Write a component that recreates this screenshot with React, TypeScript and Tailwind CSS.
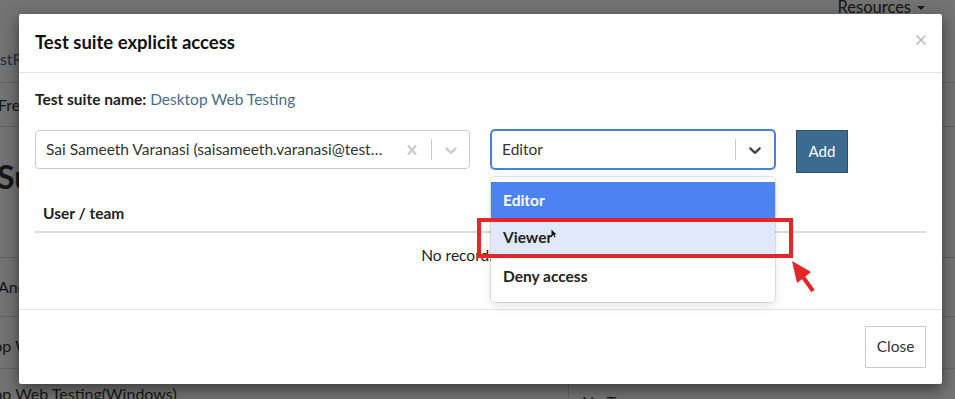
import React from "react";

const CrossIcon = ({ className }: { className?: string }) => (
  <svg viewBox="0 0 20 20" width="20" height="20" className={className} fill="currentColor">
    <path d="M14.348 14.849c-0.469 0.469-1.229 0.469-1.697 0l-2.651-3.030-2.651 3.029c-0.469 0.469-1.229 0.469-1.697 0-0.469-0.469-0.469-1.229 0-1.697l2.758-3.15-2.759-3.152c-0.469-0.469-0.469-1.228 0-1.697s1.228-0.469 1.697 0l2.652 3.031 2.651-3.031c0.469-0.469 1.228-0.469 1.697 0s0.469 1.229 0 1.697l-2.758 3.152 2.758 3.15c0.469 0.469 0.469 1.229 0 1.698z" />
  </svg>
);

const ChevronIcon = ({ className }: { className?: string }) => (
  <svg viewBox="0 0 20 20" width="20" height="20" className={className} fill="currentColor">
    <path d="M4.516 7.548c0.436-0.446 1.043-0.481 1.576 0l3.908 3.747 3.908-3.747c0.533-0.481 1.141-0.446 1.574 0 0.436 0.445 0.408 1.197 0 1.615-0.406 0.418-4.695 4.502-4.695 4.502-0.217 0.223-0.502 0.335-0.787 0.335s-0.57-0.112-0.789-0.335c0 0-4.287-4.084-4.695-4.502s-0.436-1.17 0-1.615z" />
  </svg>
);

// the dimmed page behind the dialog
const BackgroundPage = () => (
  <div className="flex h-full flex-col text-[#333]">
    <div className="flex h-[35px] shrink-0 justify-end pr-[30px]">
      <span className="-mt-[5px] flex h-[24px] items-center gap-[6px] text-[16.5px]">
        Resources
        <span className="mt-[2px] h-0 w-0 border-x-[4px] border-t-[4px] border-x-transparent border-t-[#333]" />
      </span>
    </div>
    <div className="flex h-[48px] shrink-0 items-center border-b border-[#ddd] text-base text-[#3f6a8f]">
      <span className="-ml-[16px]">TestRail Projects</span>
    </div>
    <div className="flex h-[44px] shrink-0 items-center border-b border-[#ddd] text-base">
      <span className="-ml-[2px]">Fresh Suites</span>
    </div>
    <div className="flex h-[130px] shrink-0 items-start pt-[26px] text-[32px] font-bold">
      <span className="-ml-[3px]">Suites</span>
    </div>
    <div className="flex h-[60px] shrink-0 border-y border-[#ddd] text-base">
      <div className="flex w-[569px] items-center border-r border-[#ddd]">
        <span className="-ml-[2px]">Android App Testing</span>
      </div>
      <div className="flex-1" />
    </div>
    <div className="flex h-[52px] shrink-0 border-b border-[#ddd] text-base">
      <div className="flex w-[569px] items-center border-r border-[#ddd] pt-[6px]">
        <span className="-ml-[48px]">Desktop Web Testing</span>
      </div>
      <div className="flex-1" />
    </div>
    <div className="flex flex-1 text-base">
      <div className="w-[569px] border-r border-[#ddd] pt-[13px]">
        <span className="-ml-[48px]">Desktop Web Testing(Windows)</span>
      </div>
      <div className="flex-1 whitespace-nowrap pl-[13px] pt-[21px]">No Team</div>
    </div>
  </div>
);

const UserSelect = () => (
  <div className="flex h-[39px] w-[435px] items-center rounded-[4px] border border-[#ccc] bg-white">
    <div className="flex-1 whitespace-nowrap pl-[10px] text-[15.5px] text-[#333]">
      Sai Sameeth Varanasi (saisameeth.varanasi@test…
    </div>
    <div className="flex w-[38px] justify-center text-[#ccc]">
      <CrossIcon />
    </div>
    <span className="h-[21px] w-px bg-[#ccc]" />
    <div className="flex w-[37px] justify-center text-[#ccc]">
      <ChevronIcon />
    </div>
  </div>
);

const RoleSelect = () => {
  const options = ["Editor", "Viewer", "Deny access"];

  return (
    <div className="relative w-[284px]">
      <div className="flex h-[39px] items-center rounded-[4px] border border-[#4c7fdc] bg-white shadow-[0_0_0_1px_#4c7fdc]">
        <div className="flex-1 pl-[10px] text-[15.5px] text-[#333]">Editor</div>
        <span className="h-[21px] w-px bg-[#ccc]" />
        <div className="flex w-[38px] justify-center text-[#444]">
          <ChevronIcon />
        </div>
      </div>
      <div className="absolute left-0 top-[47px] z-10 w-full rounded-[4px] bg-white py-[5px] shadow-[0_0_0_1px_rgba(0,0,0,0.1),0_4px_11px_rgba(0,0,0,0.1)]">
        {options.map((option, index) => (
          <div
            key={index}
            className={
              index === 0
                ? "flex h-[37px] items-center bg-[#4c82f1] px-3 text-[15.5px] font-bold text-white"
                : index === 1
                ? "flex h-[38px] items-center bg-[#e0e9fb] px-3 text-[15.5px] font-bold text-[#222]"
                : "flex h-[40px] items-center px-3 text-[15.5px] font-bold text-[#222]"
            }
          >
            {option}
          </div>
        ))}
      </div>
    </div>
  );
};

const AccessModal = () => (
  <div className="w-[923px] rounded-[2px] bg-white shadow-[0_5px_15px_rgba(0,0,0,0.5)]">
    <div className="flex h-[59px] items-center justify-between border-b border-[#e5e5e5] px-4">
      <h4 className="text-[18.5px] font-bold text-[#111]">Test suite explicit access</h4>
      <svg width="10" height="10" viewBox="0 0 10 10" className="-mt-[6px] text-[#b3b3b3]">
        <path d="M0.5 0.5L9.5 9.5M9.5 0.5L0.5 9.5" stroke="currentColor" strokeWidth="1.4" />
      </svg>
    </div>

    <div className="px-4 pb-8 pt-4">
      <p className="text-[15.5px] leading-5 text-[#222]">
        <span className="font-bold">Test suite name:</span>{" "}
        <span className="text-[#4a6b8a]">Desktop Web Testing</span>
      </p>

      <div className="mt-[21px] flex items-start gap-[21px]">
        <UserSelect />
        <RoleSelect />
        <button className="h-[43px] w-[52px] border border-[#2c506f] bg-[#3d6a8f] text-[15px] text-white">
          Add
        </button>
      </div>

      <table className="mt-[22px] w-full border-collapse text-[15.5px] text-[#222]">
        <thead>
          <tr>
            <th className="border-b-2 border-[#ddd] px-2 py-2 text-left font-bold leading-5">User / team</th>
          </tr>
        </thead>
        <tbody>
          <tr>
            <td className="px-2 py-3 text-center leading-5">No records found</td>
          </tr>
        </tbody>
      </table>
    </div>

    <div className="flex justify-end border-t border-[#e5e5e5] p-4">
      <button className="h-[42px] w-[61px] border border-[#ccc] bg-white text-[15.5px] text-[#333]">Close</button>
    </div>
  </div>
);

export default function App() {
  return (
    <div className="relative h-[399px] w-[955px] overflow-hidden bg-white font-['Lato',sans-serif]">
      <BackgroundPage />
      <div className="absolute inset-0 bg-black/[0.55]" />
      <div className="absolute inset-0 pl-[19px] pt-[14px]">
        <AccessModal />
      </div>

      {/* mouse pointer over the Viewer option */}
      <svg className="absolute left-[551px] top-[229px] z-20" width="6" height="9" viewBox="0 0 6 9">
        <path d="M0.5 0.5L0.5 7.5L2.2 5.8L3.5 8.5L4.5 8L3.3 5.4L5.5 5.4Z" fill="#111" />
      </svg>

      {/* red highlight annotation */}
      <div className="absolute left-[477px] top-[218px] z-20 h-[40px] w-[316px] border-4 border-[#e52527]" />
      <svg className="absolute left-[788px] top-[257px] z-20" width="32" height="38" viewBox="0 0 32 38">
        <path d="M4 4L23 15L9 26Z" fill="#e52527" />
        <path d="M15 20L25 34" stroke="#e52527" strokeWidth="4" />
      </svg>
    </div>
  );
}
